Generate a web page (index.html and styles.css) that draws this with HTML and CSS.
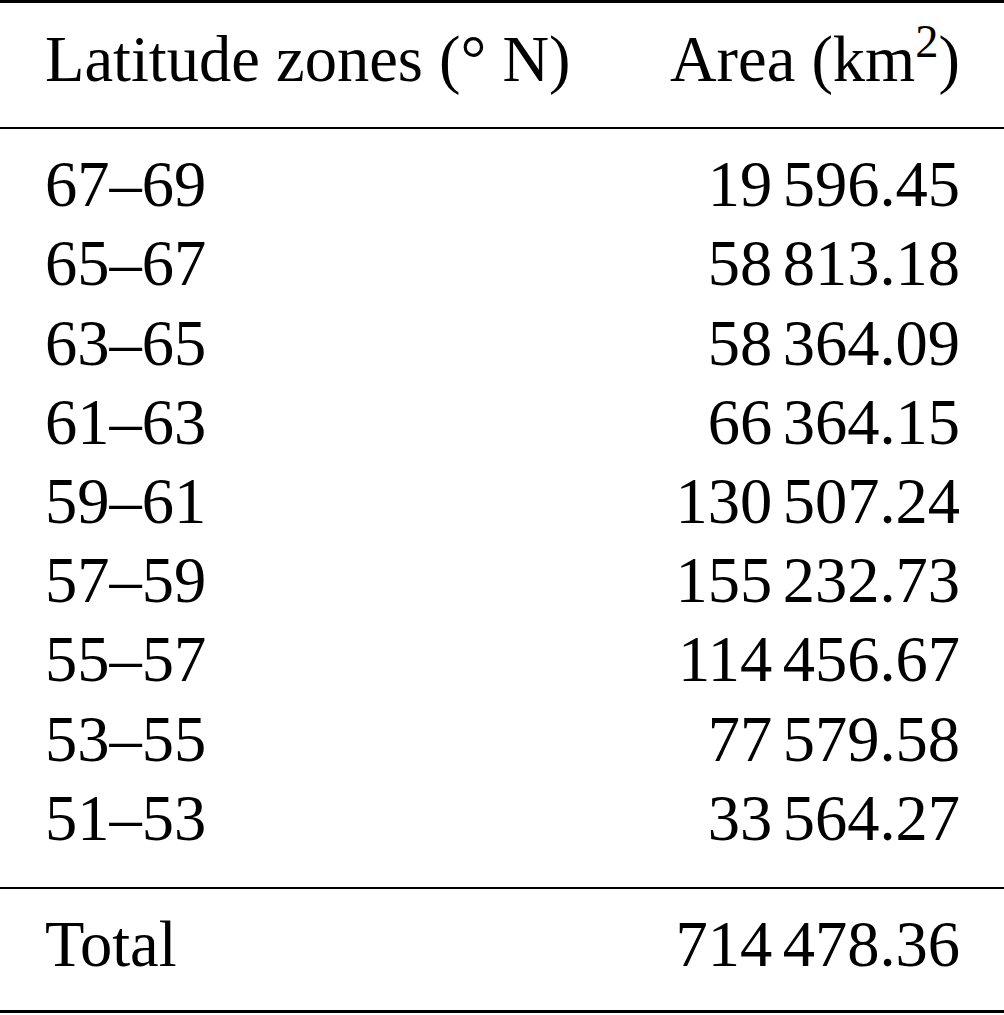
FILE: index.html
```html
<!DOCTYPE html>
<html lang="en">
<head>
  <meta charset="UTF-8">
  <meta name="viewport" content="width=device-width, initial-scale=1.0">
  <title>Area by latitude zone</title>
  <link rel="stylesheet" href="styles.css">
</head>
<body>
  <table class="area-table">
    <thead>
      <tr>
        <th class="col-zone">Latitude zones (° N)</th>
        <th class="col-area">Area (km<sup>2</sup>)</th>
      </tr>
    </thead>
    <tbody>
      <tr><td>67–69</td><td class="num"><span class="grp">19</span>596.45</td></tr>
      <tr><td>65–67</td><td class="num"><span class="grp">58</span>813.18</td></tr>
      <tr><td>63–65</td><td class="num"><span class="grp">58</span>364.09</td></tr>
      <tr><td>61–63</td><td class="num"><span class="grp">66</span>364.15</td></tr>
      <tr><td>59–61</td><td class="num"><span class="grp">130</span>507.24</td></tr>
      <tr><td>57–59</td><td class="num"><span class="grp">155</span>232.73</td></tr>
      <tr><td>55–57</td><td class="num"><span class="grp">114</span>456.67</td></tr>
      <tr><td>53–55</td><td class="num"><span class="grp">77</span>579.58</td></tr>
      <tr><td>51–53</td><td class="num"><span class="grp">33</span>564.27</td></tr>
    </tbody>
    <tfoot>
      <tr><td>Total</td><td class="num"><span class="grp">714</span>478.36</td></tr>
    </tfoot>
  </table>
</body>
</html>
```

FILE: styles.css
```css
* {
  margin: 0;
  padding: 0;
  box-sizing: border-box;
}
body {
  background: #fff;
  color: #000;
  font-family: 'Liberation Serif', 'Times New Roman', serif;
  font-size: 64.5px;
  line-height: 79.2px;
}
.area-table {
  width: 100%;
  border-collapse: collapse;
  border-top: 3px solid #000;
  border-bottom: 3px solid #000;
}
th, td {
  font-weight: normal;
  padding: 0 44px 0 45px;
  white-space: nowrap;
}
th.col-zone {
  text-align: left;
}
th.col-area,
td.num {
  text-align: right;
}

/* cabeçalho */
thead th {
  padding-top: 17px;
  padding-bottom: 28px;
  border-bottom: 2px solid #000;
}
sup {
  font-size: 0.72em;
  vertical-align: baseline;
  position: relative;
  top: -0.52em;
  line-height: 0;
}

/* separador de milhar (espaço fino) */
.grp {
  margin-right: 0.16em;
}

/* linhas */
tbody tr:first-child td {
  padding-top: 16px;
}
tbody tr:last-child td {
  padding-bottom: 29px;
}
tfoot td {
  border-top: 2px solid #000;
  padding-top: 16px;
  padding-bottom: 26px;
}
```
